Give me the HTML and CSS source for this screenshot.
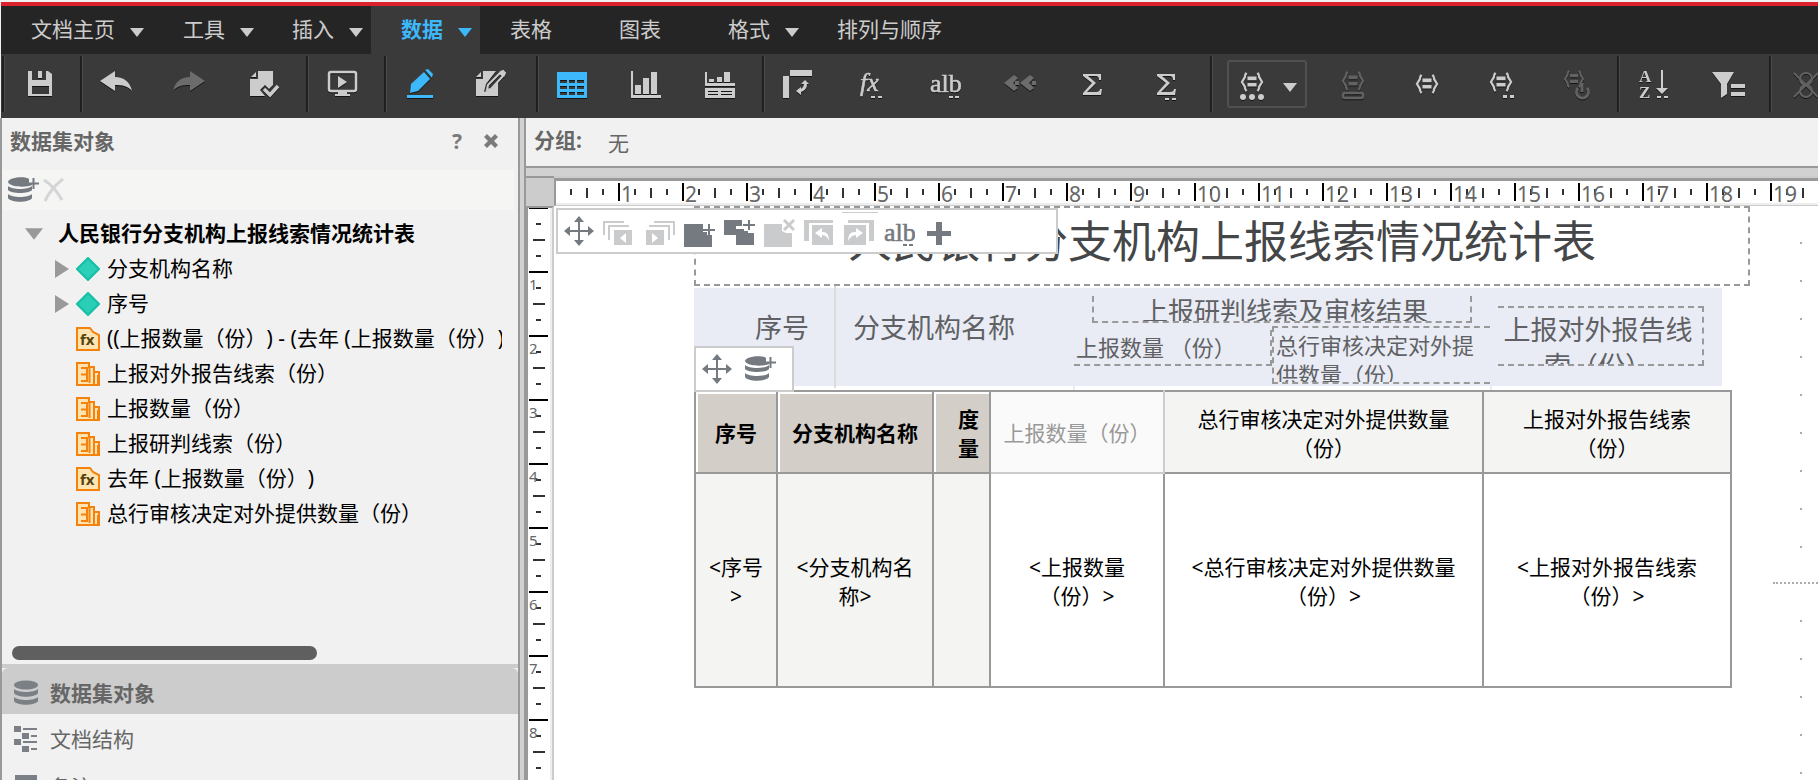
FILE: index.html
```html
<!DOCTYPE html>
<html lang="zh-CN">
<head>
<meta charset="utf-8">
<title>人民银行分支机构上报线索情况统计表</title>
<link rel="stylesheet" href="styles.css">
</head>
<body>
<svg class="sprite" aria-hidden="true">
  <symbol id="caret" viewBox="0 0 14 9"><path d="M0 0h14L7 9z" fill="currentColor"/></symbol>
  <symbol id="move" viewBox="0 0 32 32"><path d="M16 1l5 6h-4v8h8v-4l6 5-6 5v-4h-8v8h4l-5 6-5-6h4v-8H7v4l-6-5 6-5v4h8V7h-4z" fill="currentColor"/></symbol>
  <symbol id="db" viewBox="0 0 24 26"><g fill="currentColor"><ellipse cx="12" cy="5" rx="12" ry="4.5"/><path d="M0 9c4 4 20 4 24 0v4c-3 5-21 5-24 0zM0 17c4 4 20 4 24 0v4c-3 5-21 5-24 0z"/></g></symbol>
  <symbol id="dbplus" viewBox="0 0 31 26"><g fill="currentColor"><path d="M0 5C1 0 18-1 21 2v5h3v1C18 11 1 10 0 5zM0 9c4 4 20 4 24 0v4c-3 4-21 4-24 0zM0 17c4 4 20 4 24 0v4c-3 5-21 5-24 0z"/><path d="M24.500 1h2v4.500H31v2h-4.500V12h-2V7.500H20v-2h4.500z"/></g></symbol>
  <symbol id="fxdoc" viewBox="0 0 24 24"><path d="M1 1h13l3 4 6 3v15H1z" fill="#ffe3b0" stroke="#f5820a" stroke-width="2"/><text x="4" y="18" class="fxdoc-text">fx</text></symbol>
  <symbol id="metric" viewBox="0 0 24 24"><path d="M1 1h12v4h5v5h5v13H1z" fill="#ffe3b0" stroke="#f5820a" stroke-width="2"/><path d="M5 6h6v13H5M5 12.500h6M13.500 4v17M18 10v12M22 13v9" fill="none" stroke="#f5820a" stroke-width="2"/></symbol>
  <symbol id="braces" viewBox="0 0 26 22"><path d="M7 1Q5 3 5 6L2 11l3 5q0 3 2 5M19 1q2 2 2 5l3 5-3 5q0 3-2 5" fill="none" stroke="currentColor" stroke-width="2.500"/><path d="M8 5h10v4H8zM8 12h10v4H8z" fill="currentColor"/></symbol>
</svg>

<header class="app-head">
  <nav class="menu">
    <button class="tab first">文档主页<svg class="caret"><use href="#caret"/></svg></button>
    <button class="tab">工具<svg class="caret"><use href="#caret"/></svg></button>
    <button class="tab">插入<svg class="caret"><use href="#caret"/></svg></button>
    <button class="tab active">数据<svg class="caret"><use href="#caret"/></svg></button>
    <button class="tab">表格</button>
    <button class="tab">图表</button>
    <button class="tab">格式<svg class="caret"><use href="#caret"/></svg></button>
    <button class="tab">排列与顺序</button>
  </nav>
  <div class="toolbar">
    <div class="group">
      <button class="tool" aria-label="保存"><svg viewBox="-1 0 32 32"><path d="M6 3h3v9h14V3h2l4 3v22H5V3zm3 15v8h17v-8zM15 3h4v7h-4z" fill="currentColor" fill-rule="evenodd"/></svg></button>
    </div>
    <div class="group">
      <button class="tool" aria-label="撤销"><svg viewBox="0 0 32 32"><path d="M0 13L15 3v6c9 0 15 5 17 14-4-5-9-6-17-6v6z" fill="currentColor"/></svg></button>
      <button class="tool dim" aria-label="重做"><svg viewBox="1 0 32 32"><path d="M32 13L17 3v6C8 9 2 14 0 23c4-5 9-6 17-6v6z" fill="currentColor"/></svg></button>
      <button class="tool" aria-label="提交"><svg viewBox="1 0 32 32"><path d="M11 3h15v14l-4 4-4-4-5 5 5 6H3V11h8zM9 4v5H4z" fill="currentColor"/><path d="M17 21l6 6 8-9" fill="none" stroke="currentColor" stroke-width="3.500"/></svg></button>
    </div>
    <div class="group">
      <button class="tool" aria-label="演示"><svg viewBox="0 0 32 32"><rect x="3" y="4" width="27" height="19" rx="2" fill="none" stroke="currentColor" stroke-width="2.500"/><path d="M12 8l9 6-9 6zM12 24h9v2h3v2H9v-2h3z" fill="currentColor"/></svg></button>
    </div>
    <div class="group">
      <button class="tool on" aria-label="编辑"><svg viewBox="0 0 32 32"><path d="M7 16L20 4l6 7-12 12-8 2zM21 2l3-1 5 5-1 4zM3 27h26v3H3z" fill="currentColor"/></svg></button>
      <button class="tool" aria-label="设计"><svg viewBox="4 0 32 32"><path d="M9 3h13L12 16l-2 8 8-3 6-7v14H2V11h7zM7 4v5H2z" fill="currentColor"/><path d="M13 22l1-5L26 5l3 3-12 13zM27 4l2-1 2 2-1 2z" fill="none" stroke="currentColor" stroke-width="2"/></svg></button>
    </div>
    <div class="group">
      <button class="tool on" aria-label="网格"><svg viewBox="0 0 32 32"><path d="M1 4h30v26H1zm3 8v3h7v-3zm9 0v3h6v-3zm8 0v3h7v-3zM4 18v3h7v-3zm9 0v3h6v-3zm8 0v3h7v-3zM4 24v3h7v-3zm9 0v3h6v-3zm8 0v3h7v-3z" fill="currentColor" fill-rule="evenodd"/></svg></button>
      <button class="tool" aria-label="图形"><svg viewBox="0 0 32 32"><path d="M1 3h2v24h28v3H1zM5 17h6v9H5zM13 10h6v16h-6zM21 4h6v22h-6z" fill="currentColor"/></svg></button>
      <button class="tool" aria-label="网格和图形"><svg viewBox="0 0 32 32"><path d="M1 4h2v11h28v3H1zM5 11h5v3H5zM13 9h5v5h-5zM20 4h6v10h-6zM1 20h30v10H1zm3 3v1h10v-1zm13 0v1h11v-1zM4 26v1h10v-1zm13 0v1h11v-1z" fill="currentColor" fill-rule="evenodd"/></svg></button>
    </div>
    <div class="group">
      <button class="tool" aria-label="交换行列"><svg viewBox="0 0 32 32"><path d="M8 2h22v6H8zM1 8h6v22H1zM23 12l4 4h-2q0 6-6 8v3l-5-4 5-4v2q3-2 3-5h-3z" fill="currentColor"/></svg></button>
      <button class="tool" aria-label="插入公式"><svg viewBox="0 0 32 32"><text x="4" y="23" class="glyph ital">fx</text><path d="M15 28h4v2h-4zM22 28h4v2h-4z" fill="currentColor"/></svg></button>
      <button class="tool" aria-label="重命名"><svg viewBox="1 0 32 32"><text x="1" y="24" class="glyph">alb</text><path d="M20 28h4v2h-4zM26 28h4v2h-4z" fill="currentColor"/></svg></button>
      <button class="tool dim" aria-label="前移"><svg viewBox="0 0 32 32"><path d="M10 7l4 3-5 5 5 5-4 3-10-8zM26 7l4 3-5 5 5 5-4 3-10-8zM11 13h4v4h-4zM28 13h4v4h-4z" fill="currentColor"/></svg></button>
      <button class="tool" aria-label="总计"><svg viewBox="2 0 32 32"><path d="M7 6h18v6h-2q0-4-3-4h-8l8 7-9 9h9q4 0 4-3h2l-1 6H7v-2l9-10-9-7z" fill="currentColor"/></svg></button>
      <button class="tool" aria-label="小计"><svg viewBox="2 0 32 32"><path d="M7 6h18v6h-2q0-4-3-4h-8l8 7-9 9h9q4 0 4-3h2l-1 6H7v-2l9-10-9-7zM15 30h4v2h-4zM22 30h4v2h-4z" fill="currentColor"/></svg></button>
    </div>
    <div class="group">
      <button class="combo" aria-label="阈值"><svg class="ico" viewBox="1 0 32 32"><use href="#braces" x="3" y="4" width="28" height="20"/><circle cx="8" cy="29" r="3" fill="currentColor"/><circle cx="17" cy="29" r="3" fill="currentColor"/><circle cx="26" cy="29" r="3" fill="currentColor"/></svg><svg class="caret"><use href="#caret"/></svg></button>
      <button class="tool off" aria-label="切换阈值"><svg viewBox="0 0 32 32"><use href="#braces" x="2" y="3" width="28" height="20"/><rect x="6" y="25" width="20" height="5" rx="2" fill="none" stroke="currentColor" stroke-width="2.500"/></svg></button>
      <button class="tool" aria-label="高级阈值"><svg viewBox="0 0 32 32"><use href="#braces" x="2" y="6" width="28" height="20"/></svg></button>
      <button class="tool" aria-label="编辑阈值"><svg viewBox="0 0 32 32"><use href="#braces" x="2" y="4" width="28" height="20"/><path d="M18 27h4v3h-4zM25 27h4v3h-4z" fill="currentColor"/></svg></button>
      <button class="tool off" aria-label="清除阈值"><svg viewBox="-2 0 32 32"><use href="#braces" x="0" y="2" width="26" height="18"/><path d="M17 20a6 6 0 1 0 9 0M21 15v9" fill="none" stroke="currentColor" stroke-width="3"/></svg></button>
    </div>
    <div class="group">
      <button class="tool" aria-label="排序"><svg viewBox="0 0 32 32"><text x="2" y="14" class="az">A</text><text x="2" y="30" class="az">Z</text><path d="M24 2h2v18h5l-6 6-6-6h5zM20 28h4v2h-4zM27 28h4v2h-4z" fill="currentColor"/></svg></button>
      <button class="tool" aria-label="过滤"><svg viewBox="-1 0 32 32"><path d="M0 4h22l-7 12v10l-6 4V16zM19 16h14v4H19zM19 24h14v4H19z" fill="currentColor"/></svg></button>
    </div>
    <div class="group">
      <button class="tool off" aria-label="隐藏空值"><svg viewBox="1 0 32 32"><ellipse cx="18" cy="11" rx="6" ry="6" fill="none" stroke="currentColor" stroke-width="2"/><ellipse cx="18" cy="23" rx="6" ry="6" fill="none" stroke="currentColor" stroke-width="2"/><path d="M6 5l24 24M30 5L6 29" stroke="currentColor" stroke-width="2"/></svg></button>
    </div>
  </div>
</header>

<div class="workspace">
  <aside class="side">
    <div class="side-head">
      <h2>数据集对象</h2>
      <button class="mini" aria-label="帮助">?</button>
      <button class="mini" aria-label="关闭"><svg viewBox="0 0 14 14"><path d="M0 3l3-3 4 4 4-4 3 3-4 4 4 4-3 3-4-4-4 4-3-3 4-4z" fill="currentColor"/></svg></button>
    </div>
    <div class="side-tools">
      <button aria-label="添加数据集"><svg class="i-dbp"><use href="#dbplus"/></svg></button>
      <button aria-label="删除" class="faint"><svg class="i-x" viewBox="0 0 22 24"><path d="M1 2q10 6 18 20M20 1Q8 10 2 23" fill="none" stroke="currentColor" stroke-width="3"/></svg></button>
    </div>
    <ul class="tree">
      <li class="root"><svg class="open"><use href="#caret"/></svg><span>人民银行分支机构上报线索情况统计表</span></li>
      <li><i class="closed"></i><svg class="kind" viewBox="0 0 24 24"><path d="M12 1l11 11-11 11L1 12z" fill="#2bceb6" stroke="#14bfa5" stroke-width="2"/></svg><span>分支机构名称</span></li>
      <li><i class="closed"></i><svg class="kind" viewBox="0 0 24 24"><path d="M12 1l11 11-11 11L1 12z" fill="#2bceb6" stroke="#14bfa5" stroke-width="2"/></svg><span>序号</span></li>
      <li><i></i><svg class="kind"><use href="#fxdoc"/></svg><span>((上报数量（份）) - (去年 (上报数量（份）)))</span></li>
      <li><i></i><svg class="kind"><use href="#metric"/></svg><span>上报对外报告线索（份）</span></li>
      <li><i></i><svg class="kind"><use href="#metric"/></svg><span>上报数量（份）</span></li>
      <li><i></i><svg class="kind"><use href="#metric"/></svg><span>上报研判线索（份）</span></li>
      <li><i></i><svg class="kind"><use href="#fxdoc"/></svg><span>去年 (上报数量（份）)</span></li>
      <li><i></i><svg class="kind"><use href="#metric"/></svg><span>总行审核决定对外提供数量（份）</span></li>
    </ul>
    <div class="thumb"></div>
    <div class="stack">
      <button class="sel"><svg viewBox="0 0 24 26"><use href="#db"/></svg>数据集对象</button>
      <button><svg viewBox="0 0 24 26"><path d="M0 0h7v6H0zM8 7h7v6H8zM0 13h7v6H0zM8 20h7v6H8zM9 2h14v2H9zM17 9h6v2h-6zM9 15h14v2H9zM17 22h6v2h-6z" fill="currentColor"/></svg>文档结构</button>
      <button><svg viewBox="0 0 24 26"><path d="M1 1h22v25H1z" fill="currentColor"/></svg>备注</button>
    </div>
  </aside>
  <div class="splitter"></div>
  <main class="main">
    <section class="grouping"><b>分组:</b><span>无</span></section>
    <section class="editor">
      <div class="corner"></div>
      <div class="hruler"><span></span><span>1</span><span>2</span><span>3</span><span>4</span><span>5</span><span>6</span><span>7</span><span>8</span><span>9</span><span>10</span><span>11</span><span>12</span><span>13</span><span>14</span><span>15</span><span>16</span><span>17</span><span>18</span><span>19</span></div>
      <div class="vruler"><span></span><span>1</span><span>2</span><span>3</span><span>4</span><span>5</span><span>6</span><span>7</span><span>8</span></div>
      <div class="canvas">
        <h1 class="doc-title">人民银行分支机构上报线索情况统计表</h1>
        <div class="band"></div>
        <div class="band-line"></div>
        <div class="tick t1"></div><div class="tick t2"></div>
        <div class="field f-no">序号</div>
        <div class="field f-name">分支机构名称</div>
        <div class="field f-result">上报研判线索及审核结果</div>
        <div class="field f-count">上报数量 （份）</div>
        <div class="field f-hq">总行审核决定对外提供数量（份）</div>
        <div class="field f-ext">上报对外报告线索（份）</div>
        <table class="grid">
          <colgroup><col class="c1"><col class="c2"><col class="c3"><col class="c4"><col class="c5"><col class="c6"></colgroup>
          <tr><th class="raised">序号</th><th class="raised">分支机构名称</th><th class="raised metric">度量</th><th class="ghost">上报数量（份）</th><th>总行审核决定对外提供数量（份）</th><th>上报对外报告线索（份）</th></tr>
          <tr><td class="dim-cell">&lt;序号&gt;</td><td class="dim-cell">&lt;分支机构名称&gt;</td><td class="dim-cell"></td><td>&lt;上报数量（份）&gt;</td><td>&lt;总行审核决定对外提供数量（份）&gt;</td><td>&lt;上报对外报告线索（份）&gt;</td></tr>
        </table>
        <div class="float f-page">
          <button aria-label="移动"><svg><use href="#move"/></svg></button>
          <button class="faint" aria-label="上一面板"><svg viewBox="0 0 32 32"><path d="M11 15h18v15H11zM23 18l-6 5 6 5z" fill="currentColor" fill-rule="evenodd"/><path d="M1 20V7h20M6 25V11h20" fill="none" stroke="currentColor" stroke-width="2"/></svg></button>
          <button class="faint" aria-label="下一面板"><svg viewBox="0 0 32 32"><path d="M3 15h18v15H3zM9 18l6 5-6 5z" fill="currentColor" fill-rule="evenodd"/><path d="M31 20V7H11M26 25V11H6" fill="none" stroke="currentColor" stroke-width="2"/></svg></button>
          <button aria-label="添加面板"><svg viewBox="0 0 32 32"><path d="M1 9h19v8h4v3h5v12H1zM25 9h2v5h5v2h-5v5h-2v-5h-5v-2h5z" fill="currentColor"/></svg></button>
          <button aria-label="复制面板"><svg viewBox="0 0 32 32"><path d="M1 5h18v6h-6v9H1zM13 14h8v2h4v2h6v12H13zM25 5h2v4h5v2h-5v4h-2v-4h-5V9h5z" fill="currentColor"/></svg></button>
          <button class="faint" aria-label="删除面板"><svg viewBox="0 0 32 32"><path d="M1 9h18v7l4 2h6v14H1z" fill="currentColor"/><path d="M21 5l10 10M31 5L21 15" stroke="currentColor" stroke-width="3"/></svg></button>
          <button class="faint" aria-label="前移"><svg viewBox="0 0 32 32"><path d="M1 5h29v3H6v18H1zM9 10h21v20H9zM12 18l7 5v-3q5 0 7 6 0-10-7-9v-4z" fill="currentColor" fill-rule="evenodd"/></svg></button>
          <button class="faint" aria-label="后移"><svg viewBox="0 0 32 32"><path d="M31 5H5v3h21v18h5zM1 10h22v20H1zM20 18l-7 5v-3q-5 0-8 6 0-10 8-9v-4z" fill="currentColor" fill-rule="evenodd"/></svg></button>
          <button aria-label="重命名"><svg viewBox="0 0 32 32"><text x="1" y="26" class="glyph">alb</text><path d="M20 29h4v2h-4zM26 29h4v2h-4z" fill="currentColor"/></svg></button>
          <button aria-label="添加"><svg viewBox="0 0 32 32"><path d="M13 7h6v9h9v5h-9v9h-6v-9H4v-5h9z" fill="currentColor"/></svg></button>
        </div>
        <div class="grip"></div>
        <div class="float f-grid">
          <button aria-label="移动表格"><svg><use href="#move"/></svg></button>
          <button aria-label="添加数据集"><svg class="i-dbp"><use href="#dbplus"/></svg></button>
        </div>
        <div class="dots upper"></div>
        <div class="page-end"></div>
        <div class="dots lower"></div>
      </div>
    </section>
  </main>
</div>
</body>
</html>
```
FILE: styles.css
```css
* { box-sizing: border-box; }
body {
  margin: 0;
  height: 100vh;
  overflow: hidden;
  display: flex;
  flex-direction: column;
  background: #f1f1f1;
  font: 21px/29px "Noto Sans", "Noto Sans CJK SC", sans-serif;
  text-spacing-trim: space-all;
  color: #000;
}
button {
  font: inherit;
  color: inherit;
  background: none;
  border: 0;
  padding: 0;
  margin: 0;
}
svg { display: block; flex: none; }
.sprite { position: absolute; width: 0; height: 0; }

/* header */
.app-head { flex: none; margin: 2px 0 0 1px; border-top: 4px solid #d9222c; background: #3b3a3b; }
.menu { display: flex; height: 48px; background: #252525; color: #ccc; }
.tab {
  display: flex;
  align-items: center;
  min-width: 109px;
  padding: 0 8px 2px 30px;
  white-space: nowrap;
}
.tab.first { min-width: 152px; }
.tab .caret { margin-left: 15px; }
.tab.active { background: #3b3a3b; color: #3cb8fb; font-weight: bold; }
.caret { width: 14px; height: 9px; margin-top: 6px; }
.toolbar { display: flex; height: 64px; padding: 2px 0 6px 1px; overflow: hidden; color: #ccc; }
.group {
  flex: none;
  display: flex;
  align-items: center;
  border-left: 2px solid #202020;
  box-shadow: inset 1px 0 #4c4c4c;
  padding-right: 2px;
}
.tool { width: 74px; padding: 0 24px 0 18px; }
.tool svg { width: 32px; height: 32px; overflow: visible; filter: drop-shadow(0 1px 0 #151515); }
.tool.dim { color: #6c6c6c; }
.tool.off { color: #626262; }
.tool.on { color: #3cb8fb; }
.combo {
  display: flex;
  align-items: center;
  gap: 15px;
  width: 80px;
  height: 48px;
  margin: 0 12px 0 15px;
  padding-left: 7px;
  border: 2px solid #505050;
  border-radius: 3px;
}
.combo .ico { width: 32px; height: 32px; filter: drop-shadow(0 1px 0 #151515); }
.glyph { font: 26px "Liberation Serif", serif; fill: currentColor; stroke: currentColor; stroke-width: 0.6px; }
.ital { font-style: italic; }
.az { font: bold 17px "Liberation Serif", serif; fill: currentColor; }

/* workspace */
.workspace { flex: 1; min-height: 0; display: flex; }
.side {
  flex: none;
  width: 518px;
  display: flex;
  flex-direction: column;
  border-left: 2px solid #999;
  background: #f1f1f1;
}
.side-head { flex: none; display: flex; align-items: center; height: 52px; padding: 0 18px 6px 8px; color: #666; }
.side-head h2 { flex: 1; margin: 0; font-size: 21px; }
.mini { width: 16px; margin-left: 19px; font-weight: bold; color: #7b7b7b; }
.mini svg { width: 14px; height: 14px; }
.side-tools { flex: none; display: flex; align-items: center; gap: 4px; height: 40px; margin-right: 4px; padding-left: 6px; background: #f5f5f3; color: #747a80; }
.i-dbp { width: 31px; height: 26px; }
.i-x { width: 22px; height: 24px; }
.side-tools .faint { color: #d3d5d6; }
.tree { flex: 1; min-height: 0; list-style: none; margin: 0 16px 0 0; padding: 6px 0 0 53px; overflow: hidden; }
.tree li { display: flex; align-items: center; height: 35px; white-space: nowrap; }
.tree .root { margin-left: -30px; font-weight: bold; }
.open { width: 18px; height: 14px; margin-right: 15px; color: #999; }
.tree i { flex: none; width: 14px; margin-right: 7px; }
.tree i.closed { border: solid transparent; border-width: 9px 0 9px 14px; border-left-color: #999; }
.kind { width: 24px; height: 24px; margin-right: 7px; }
.fxdoc-text { font: bold 15px "Noto Sans", sans-serif; fill: #54430f; }
.thumb { flex: none; width: 305px; height: 14px; margin: 0 0 4px 10px; border-radius: 7px; background: #5f5f5f; }
.stack { flex: none; height: 116px; overflow: hidden; border-top: 4px solid #ccc; color: #666; }
.stack button { display: flex; align-items: center; gap: 12px; width: 100%; height: 48px; padding: 2px 0 0 12px; }
.stack svg { width: 24px; height: 26px; color: #7b8086; }
.stack .sel { height: 46px; padding-top: 4px; background: #ccc; font-weight: bold; border-radius: 6px 6px 0 0; }
.splitter { flex: none; width: 8px; background: #d1d1d1; border: solid #999; border-width: 0 2px; }

/* editor */
.main { flex: 1; min-width: 0; display: flex; flex-direction: column; }
.grouping { flex: none; display: flex; align-items: center; gap: 26px; height: 50px; padding: 0 0 4px 8px; border-bottom: 2px solid #999; color: #666; }
.grouping span { padding-top: 6px; }
.editor {
  flex: 1;
  min-height: 0;
  display: grid;
  grid-template: 30px 1fr / 28px 1fr;
  border-top: 8px solid #d1d1d1;
  background: #ccc;
}
.corner { border-top: 2px solid #999; }
.hruler {
  display: flex;
  overflow: hidden;
  margin-top: 2px;
  border-top: 3px solid #999;
  border-left: 2px solid #999;
  border-bottom: 1px solid #ccc;
  box-shadow: inset 0 -2px #eee;
  color: #666;
  background: #fff;
}
.hruler span {
  flex: none;
  width: 64px;
  padding: 2px 0 0 3px;
  line-height: 23px;
  background:
    linear-gradient(#000, #000) 0 2px / 2px 18px,
    linear-gradient(#333, #333) 16px 8px / 2px 6px,
    linear-gradient(#333, #333) 32px 7px / 2px 10px,
    linear-gradient(#333, #333) 48px 8px / 2px 6px;
  background-repeat: no-repeat;
}
.hruler span:first-child { margin-left: -2px; }
.vruler {
  overflow: hidden;
  border-top: 2px solid #999;
  border-left: 2px solid #999;
  border-right: 2px solid #ccc;
  box-shadow: inset -2px 0 #eee;
  background: #fff;
  font-size: 15px;
  color: #666;
}
.vruler span {
  display: block;
  height: 64px;
  padding: 2px 0 0 1px;
  line-height: 22px;
  background:
    linear-gradient(#000, #000) 1px 0 / 19px 2px,
    linear-gradient(#333, #333) 8px 16px / 5px 2px,
    linear-gradient(#333, #333) 5px 32px / 12px 2px,
    linear-gradient(#333, #333) 8px 48px / 5px 2px;
  background-repeat: no-repeat;
}
.vruler span:first-child { margin-top: -1px; }

/* free canvas */
.canvas { position: relative; overflow: hidden; background: #fff; }
.canvas > * { position: absolute; }
.doc-title {
  left: 140px; top: 0; width: 1056px; height: 80px;
  margin: 0;
  border: 2px dashed #999;
  font-size: 44px; line-height: 66px; font-weight: normal;
  text-align: center;
  color: #444648;
}
.band { left: 140px; top: 82px; width: 1028px; height: 98px; background: #e9ecf4; }
.band-line { left: 280px; top: 80px; width: 2px; height: 102px; background: #ddd; }
.tick { top: 180px; width: 2px; height: 4px; background: #e9ecf4; }
.t1 { left: 519px; }
.t2 { left: 936px; }
.field { overflow: hidden; color: #5f6164; font-size: 27px; line-height: 36px; }
.f-no { left: 201px; top: 104px; }
.f-name { left: 299px; top: 104px; }
.f-result { left: 538px; top: 90px; width: 380px; height: 27px; border: 2px dashed #999; border-top: 0; padding-left: 6px; text-align: center; font-size: 26px; line-height: 31px; }
.f-count { left: 520px; top: 124px; width: 198px; height: 36px; padding-left: 2px; border: 2px dashed #999; border-width: 0 2px 2px 0; font-size: 22px; line-height: 34px; white-space: pre; }
.f-hq { left: 718px; top: 120px; width: 218px; height: 58px; padding: 3px 12px 0 2px; border: 2px dashed #999; border-right: 0; font-size: 22px; line-height: 29px; }
.f-ext { left: 944px; top: 100px; width: 206px; height: 60px; padding: 4px 8px 0 4px; border: 2px dashed #999; border-left: 0; text-align: center; }
.grid {
  left: 140px; top: 184px; width: 1038px;
  table-layout: fixed;
  border-collapse: collapse;
  text-align: center;
}
.grid .c1 { width: 82px; }
.grid .c2 { width: 156px; }
.grid .c3 { width: 57px; }
.grid .c4 { width: 174px; }
.grid .c5 { width: 319px; }
.grid th, .grid td { border: 2px solid #999; padding: 3px 10px 0; }
.grid th { height: 82px; font-weight: normal; background: #f4f4f2; }
.grid td { height: 214px; }
.grid .raised { font-weight: bold; background: #d3cec7; box-shadow: inset 2px 2px #fff; padding: 3px 2px 0; }
.grid .metric { padding: 3px 8px 0 22px; }
.grid .ghost { background: #fafafa; color: #999; border-right-color: #ccc; border-bottom-color: #ccc; }
.grid .dim-cell { background: #f4f4f2; }
.float { display: flex; align-items: center; background: #fff; border: 2px solid #ccc; color: #747a80; }
.float svg { width: 32px; height: 32px; }
.float .i-dbp { width: 31px; height: 26px; }
.float .faint { color: #c9cbcd; }
.f-page { left: 2px; top: 2px; width: 502px; height: 46px; padding-left: 5px; gap: 8px; }
.grip { left: 288px; top: 6px; width: 36px; height: 1px; background: #ccc; }
.f-grid { left: 140px; top: 140px; width: 100px; height: 46px; padding-left: 5px; gap: 12px; }
.dots { left: 1246px; width: 2px; background: linear-gradient(#aaa 2px, transparent 2px) 0 0 / 2px 38px; }
.upper { top: 36px; height: 310px; }
.lower { top: 414px; bottom: 0; }
.page-end { left: 1219px; right: 0; top: 376px; border-top: 2px dotted #aaa; }
```
